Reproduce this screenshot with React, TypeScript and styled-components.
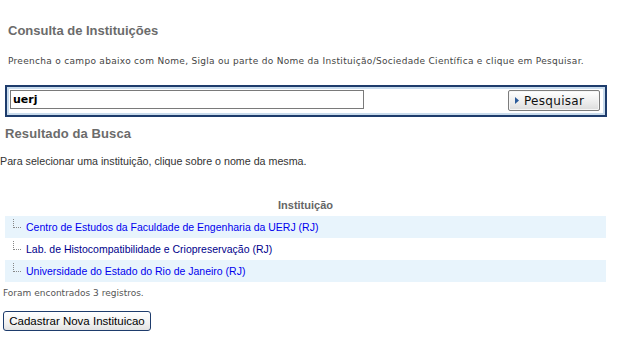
import React from "react";
import styled, { createGlobalStyle } from "styled-components";

const Global = createGlobalStyle`
  html, body { margin: 0; padding: 0; background: #fff; }
  body { font-family: "Liberation Sans", Arial, sans-serif; }
`;

const Page = styled.div`
  width: 623px;
  height: 343px;
  overflow: hidden;
  display: flex;
  flex-direction: column;
`;

const Title = styled.h1`
  margin: 23px 0 0 8px;
  font-size: 13px;
  font-weight: bold;
  letter-spacing: 0;
  color: #6b6b6b;
  line-height: 16px;
`;

const Hint = styled.p`
  margin: 16px 0 0 8px;
  font-family: "DejaVu Sans", Verdana, sans-serif;
  font-size: 9px;
  letter-spacing: 0.3px;
  color: #444;
  line-height: 12px;
`;

const SearchBar = styled.form`
  margin: 18px 0 0 5px;
  width: 590px;
  height: 28px;
  border: 2px solid #1e3c6c;
  display: flex;
  align-items: flex-start;
  justify-content: space-between;
  padding: 0 5px 0 3px;
  box-sizing: content-box;
  box-shadow: inset 0 0 0 2px #c9dced;
  background: #fff;
`;

const Field = styled.input`
  width: 348px;
  height: 15px;
  margin-top: 3px;
  border: 1px solid #7a7a7a;
  padding: 1px 2px;
  font-family: "DejaVu Sans", Verdana, sans-serif;
  font-weight: bold;
  font-size: 11px;
  color: #000;
  outline: none;
`;

const SearchButton = styled.button`
  width: 92px;
  height: 21px;
  margin-top: 3px;
  border: 1px solid #7c7c7c;
  border-radius: 2px;
  background: linear-gradient(#ffffff, #ececec 60%, #dcdcdc);
  box-shadow: inset 0 0 0 1px #f5f5f5;
  display: flex;
  align-items: center;
  gap: 5px;
  padding: 0 0 0 6px;
  font-family: "DejaVu Sans", Verdana, sans-serif;
  font-size: 12px;
  letter-spacing: 0.3px;
  color: #111;
`;

const Section = styled.h2`
  margin: 9px 0 0 5px;
  font-size: 13px;
  font-weight: bold;
  letter-spacing: 0.1px;
  color: #6b6b6b;
  line-height: 16px;
`;

const Note = styled.p`
  margin: 12px 0 0 0;
  font-size: 10.7px;
  color: #333;
  line-height: 14px;
`;

const Table = styled.div`
  margin: 30px 0 0 5px;
  width: 601px;
  display: flex;
  flex-direction: column;
`;

const HeadCell = styled.div`
  text-align: center;
  font-size: 11px;
  font-weight: bold;
  color: #666;
  height: 18px;
  line-height: 14px;
`;

const Row = styled.div<{ $shade: boolean }>`
  height: 22px;
  display: flex;
  align-items: center;
  background: ${(p) => (p.$shade ? "#e8f4fc" : "#fff")};
`;

const Tree = styled.span`
  width: 8px;
  height: 9px;
  margin: 3px 5px 0 8px;
  box-sizing: border-box;
  border-left: 1px dotted #888;
  border-bottom: 1px dotted #888;
  align-self: flex-start;
`;

const Link = styled.a<{ $dark?: boolean }>`
  font-size: 10.5px;
  color: ${(p) => (p.$dark ? "#00008b" : "#0000ee")};
  text-decoration: none;
  line-height: 14px;
`;

const Count = styled.p`
  margin: 5px 0 0 3px;
  font-family: "DejaVu Sans", Verdana, sans-serif;
  font-size: 9px;
  letter-spacing: 0;
  color: #555;
  line-height: 12px;
`;

const NewButton = styled.button`
  margin: 12px 0 0 3px;
  width: 148px;
  height: 20px;
  align-self: flex-start;
  border: 1px solid #1e3c6c;
  border-radius: 3px;
  background: linear-gradient(#ffffff, #f2f2f2 60%, #e2e2e2);
  font-family: "Liberation Sans", Arial, sans-serif;
  font-size: 11.5px;
  color: #000;
  padding: 0;
`;

const Arrow = () => (
  <svg width="4" height="7" viewBox="0 0 4 7">
    <path d="M0 0 L4 3.5 L0 7 Z" fill="#2a5a9a" />
  </svg>
);

const rows = [
  { name: "Centro de Estudos da Faculdade de Engenharia da UERJ (RJ)" },
  { name: "Lab. de Histocompatibilidade e Criopreservação (RJ)", dark: true },
  { name: "Universidade do Estado do Rio de Janeiro (RJ)" },
];

export default function App() {
  return (
    <Page>
      <Global />
      <Title>Consulta de Instituições</Title>
      <Hint>
        Preencha o campo abaixo com Nome, Sigla ou parte do Nome da Instituição/Sociedade Científica e clique em Pesquisar.
      </Hint>
      <SearchBar onSubmit={(e) => e.preventDefault()}>
        <Field defaultValue="uerj" />
        <SearchButton type="button">
          <Arrow />
          Pesquisar
        </SearchButton>
      </SearchBar>
      <Section>Resultado da Busca</Section>
      <Note>Para selecionar uma instituição, clique sobre o nome da mesma.</Note>
      <Table>
        <HeadCell>Instituição</HeadCell>
        {rows.map((r, i) => (
          <Row key={r.name} $shade={i % 2 === 0}>
            <Tree />
            <Link href="#" $dark={r.dark}>{r.name}</Link>
          </Row>
        ))}
      </Table>
      <Count>Foram encontrados 3 registros.</Count>
      <NewButton type="button">Cadastrar Nova Instituicao</NewButton>
    </Page>
  );
}
